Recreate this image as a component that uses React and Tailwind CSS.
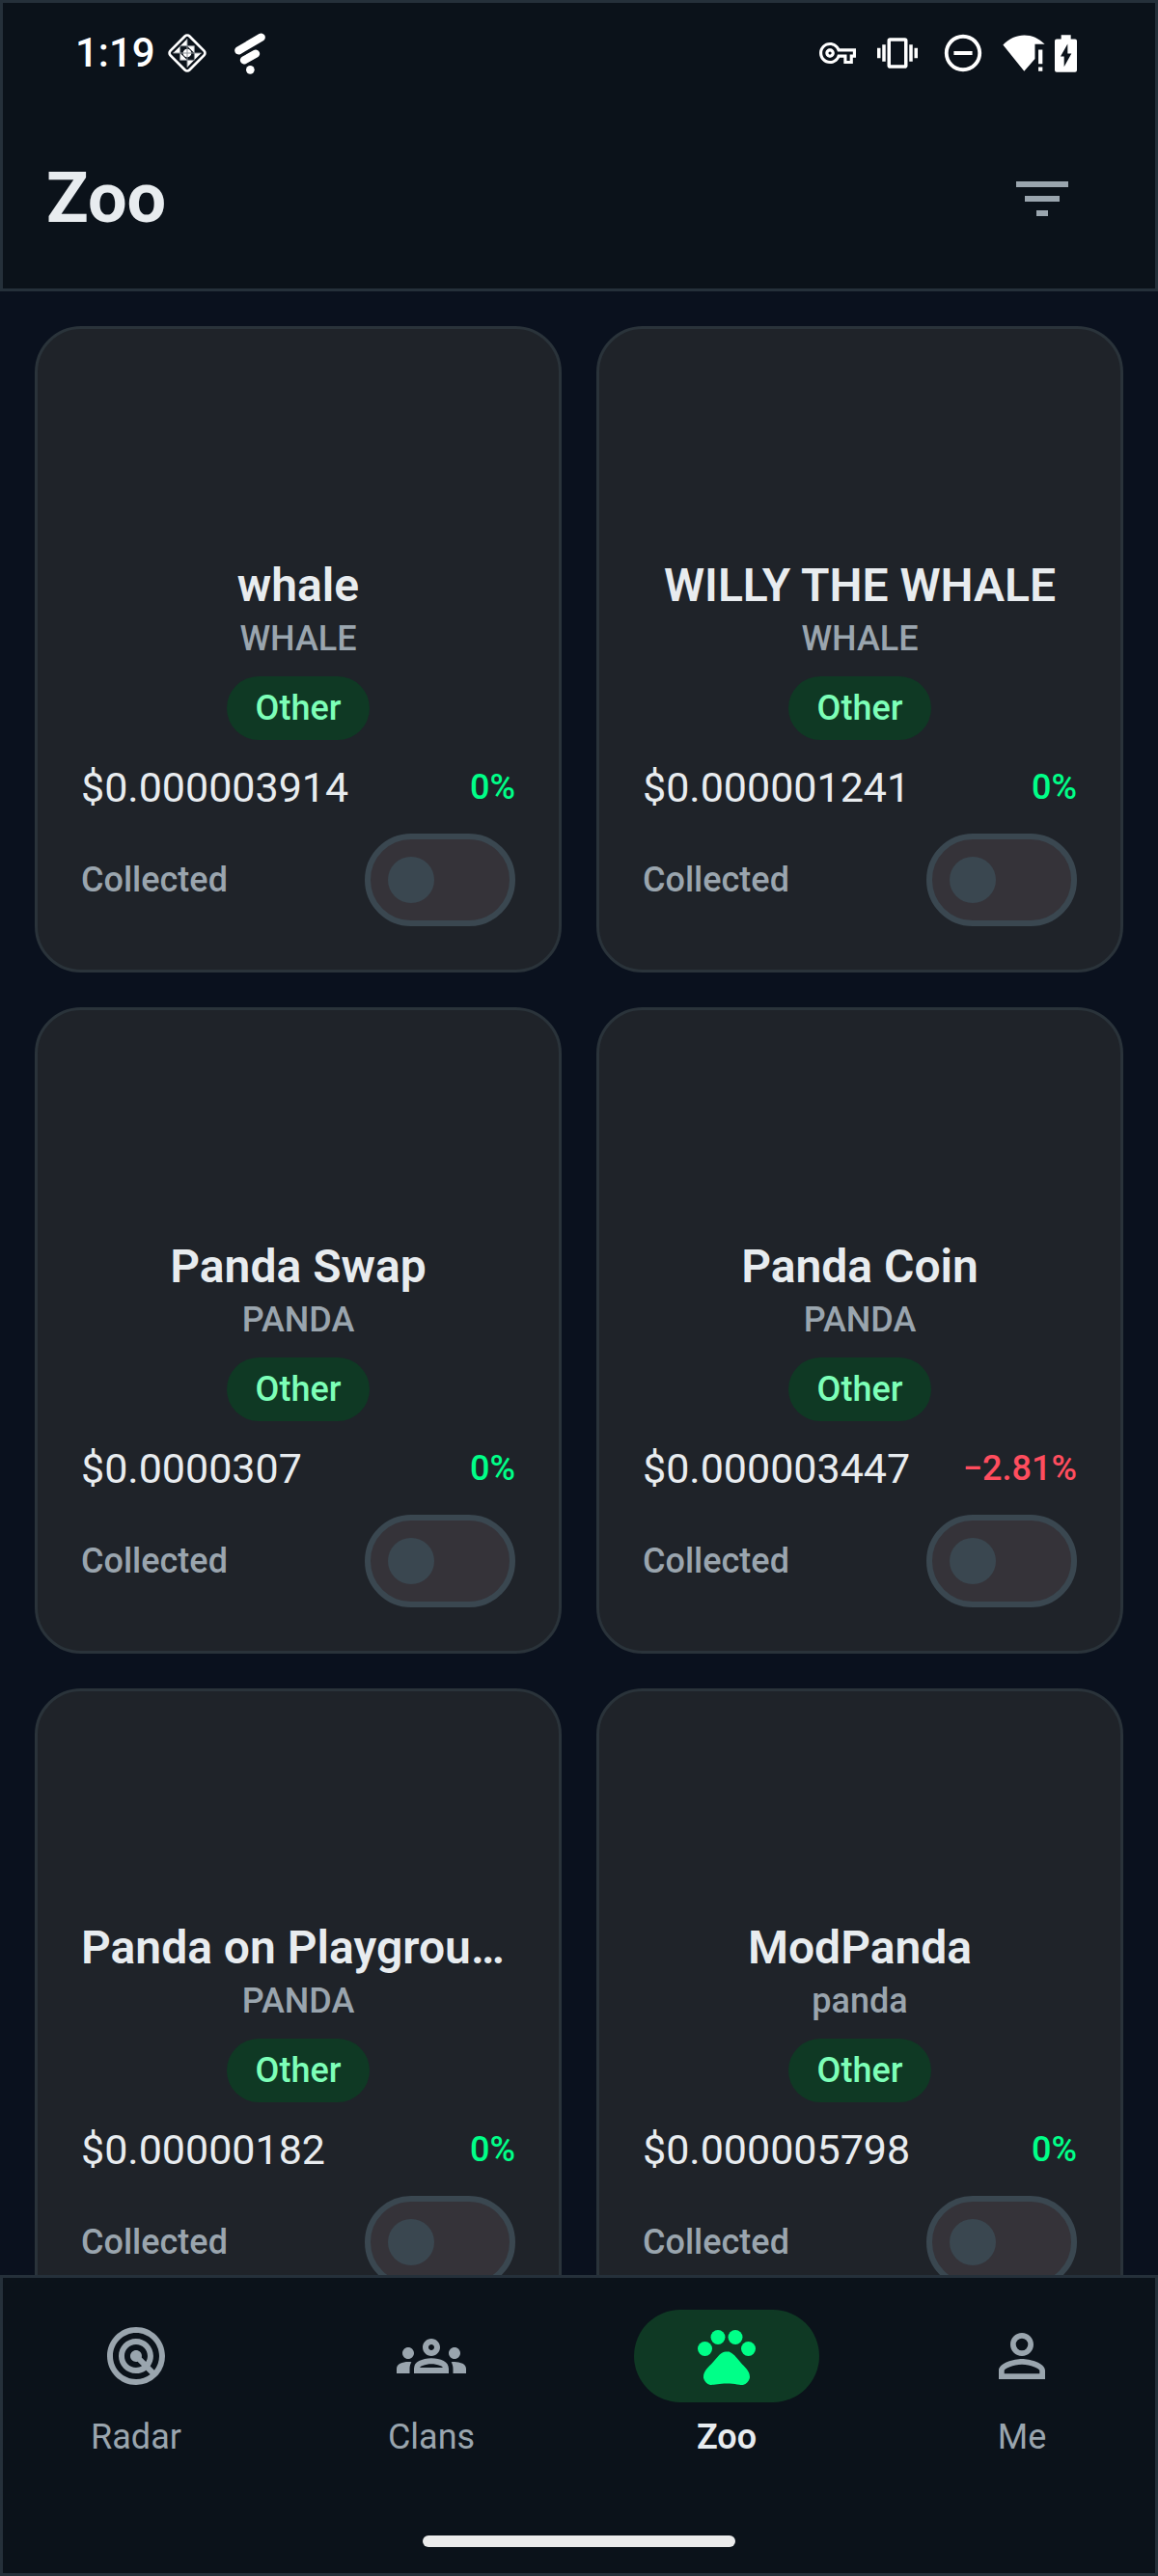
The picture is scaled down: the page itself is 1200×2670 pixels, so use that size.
import React from 'react';
import {
    MdFilterList,
    MdOutlineGroups,
    MdOutlineVpnKey,
    MdPersonOutline,
    MdPets,
    MdRadar,
    MdRemoveCircleOutline,
    MdVibration,
} from 'react-icons/md';

const coins = [
    { id: 1, name: 'whale', ticker: 'WHALE', tag: 'Other', price: '$0.000003914', change: 0 },
    { id: 2, name: 'WILLY THE WHALE', ticker: 'WHALE', tag: 'Other', price: '$0.000001241', change: 0 },
    { id: 3, name: 'Panda Swap', ticker: 'PANDA', tag: 'Other', price: '$0.0000307', change: 0 },
    { id: 4, name: 'Panda Coin', ticker: 'PANDA', tag: 'Other', price: '$0.000003447', change: -2.81 },
    { id: 5, name: 'Panda on Playground', ticker: 'PANDA', tag: 'Other', price: '$0.00000182', change: 0 },
    { id: 6, name: 'ModPanda', ticker: 'panda', tag: 'Other', price: '$0.000005798', change: 0 },
];

const tabs = [
    { label: 'Radar', icon: MdRadar },
    { label: 'Clans', icon: MdOutlineGroups },
    { label: 'Zoo', icon: MdPets, active: true },
    { label: 'Me', icon: MdPersonOutline },
];

function formatChange(change) {
    return `${change < 0 ? '−' : ''}${Math.abs(change)}%`;
}

function DiamondIcon({ className }) {
    return (
        <svg viewBox="0 0 126 126" className={className} aria-hidden="true">
            <rect x="21" y="21" width="84" height="84" rx="10" transform="rotate(45 63 63)" fill="none" stroke="currentColor" strokeWidth="8" />
            <g fill="currentColor">
                {/* Pinwheel blades */}
                <path d="M41 41L63 19V41zM19 63L41 41V63zM85 63H107L85 85zM63 85H85L63 107z" />
                {/* Inner corners */}
                <path d="M63 41H85V63zM41 63V85H63z" />
                <circle cx="63" cy="63" r="13" />
            </g>
            <path d="M41 41H85V85H41zM63 19V107M19 63H107" fill="none" stroke="#8b9096" strokeWidth="3" />
        </svg>
    );
}

function StripesIcon({ className }) {
    return (
        <svg viewBox="732 100 96 129" className={className} aria-hidden="true">
            <g stroke="currentColor" strokeWidth="25" strokeLinecap="round">
                <path d="M745 155L815 114" />
                <path d="M762 185L798 165" />
            </g>
            <circle cx="781" cy="215" r="13" fill="currentColor" />
        </svg>
    );
}

function WifiAlertIcon({ className }) {
    return (
        <svg viewBox="717 105 132 116" className={className} fill="currentColor" aria-hidden="true">
            <path d="M717 137C754 97 812 96 849 135H818V181L784 220Z" />
            <path d="M829 152h13v45h-13zM829 207h13v13h-13z" />
        </svg>
    );
}

function BatteryIcon({ className }) {
    return (
        <svg viewBox="879 105 69 116" className={className} fill="currentColor" aria-hidden="true">
            <path
                fillRule="evenodd"
                d="M899 105h30v13h13q6 0 6 6v91q0 6-6 6h-57q-6 0-6-6v-91q0-6 6-6h14zM919 133L897 172H908V204L931 163H919z"
            />
        </svg>
    );
}

function StatusBar() {
    return (
        <div className="flex h-[104px] items-center justify-between pl-[75px] pr-[81px] text-white">
            <div className="flex items-center">
                <span className="text-[42px] leading-[60px] font-medium">1:19</span>
                <DiamondIcon className="ml-3 size-[42px]" />
                <StripesIcon className="ml-7 h-[43px] w-8" />
            </div>
            <div className="flex items-center">
                <MdOutlineVpnKey className="size-[38px]" />
                <MdVibration className="ml-[22px] size-[42px]" />
                <MdRemoveCircleOutline className="ml-6 size-[46px]" />
                <WifiAlertIcon className="ml-[18px] h-[38px] w-11" />
                <BatteryIcon className="ml-[10px] h-[39px] w-[23px]" />
            </div>
        </div>
    );
}

function CoinCard({ coin }) {
    const toggleId = `collected-${coin.id}`;

    return (
        <article className="min-w-0 rounded-[48px] border-3 border-[#2a333a] bg-[#1f2329] p-[45px]">
            {/* Artwork slot */}
            <div className="h-[190px]" />

            <div className="flex flex-col items-center">
                <h2 className="max-w-full truncate text-5xl leading-[62px] font-semibold text-[#e8ecef]">{coin.name}</h2>
                <p className="text-4xl leading-[48px] font-medium text-[#9aa5ae]">{coin.ticker}</p>
                <span className="mt-[15px] rounded-full bg-[#0f3924] px-[30px] py-[9px] text-4xl leading-[48px] font-medium text-[#7dffb8]">
                    {coin.tag}
                </span>
            </div>

            <div className="mt-[19px] flex items-center justify-between">
                <span className="text-[43px] leading-[60px] text-[#e8ecef]">{coin.price}</span>
                <span className={`text-4xl leading-[48px] font-medium ${coin.change < 0 ? 'text-[#ff4d5e]' : 'text-[#00ff88]'}`}>
                    {formatChange(coin.change)}
                </span>
            </div>

            <div className="mt-[18px] flex items-center justify-between">
                <label htmlFor={toggleId} className="text-4xl leading-[48px] font-medium text-[#9aa5ae]">
                    Collected
                </label>
                <input
                    id={toggleId}
                    type="checkbox"
                    role="switch"
                    className="flex h-24 w-[156px] shrink-0 cursor-pointer appearance-none items-center rounded-full border-6 border-[#3a4750] bg-[#353339] pl-[18px] before:size-12 before:rounded-full before:bg-[#3a4750] before:content-[''] checked:border-[#00ff88] checked:before:translate-x-[60px] checked:before:bg-[#00ff88]"
                />
            </div>
        </article>
    );
}

function TabBar() {
    return (
        <nav className="shrink-0 border-3 border-[#25303a] bg-[#0b121a] pt-[33px] pb-[27px]">
            <ul className="-mx-[3px] flex gap-6">
                {tabs.map(({ label, icon: Icon, active }) => (
                    <li key={label} className="flex-1">
                        <a
                            href={`#${label.toLowerCase()}`}
                            aria-current={active ? 'page' : undefined}
                            className={`flex flex-col items-center gap-3 ${active ? 'text-[#00ff88]' : 'text-[#9aa5ae]'}`}
                        >
                            <span className={`flex h-24 w-48 items-center justify-center rounded-full ${active ? 'bg-[#0f3924]' : ''}`}>
                                <Icon className="size-[72px]" />
                            </span>
                            <span className={`text-4xl leading-[48px] ${active ? 'font-semibold text-[#e8ecef]' : ''}`}>{label}</span>
                        </a>
                    </li>
                ))}
            </ul>
            <div className="mx-auto mt-[78px] h-3 w-[324px] rounded-full bg-[#ebebeb]" />
        </nav>
    );
}

export default function App() {
    return (
        <div className="flex h-screen flex-col bg-[#0a111e] font-[Roboto,sans-serif]">
            <header className="shrink-0 border-3 border-[#25303a] bg-[#0b121a] pb-[21px]">
                <StatusBar />
                <div className="mt-[27px] flex items-center justify-between px-[45px]">
                    <h1 className="text-7xl leading-[96px] font-bold text-[#e8ecef]">Zoo</h1>
                    <button type="button" aria-label="Filter" className="flex size-36 items-center justify-center text-[#9aa5ae]">
                        <MdFilterList className="size-[72px]" />
                    </button>
                </div>
            </header>

            <main className="grid min-h-0 flex-1 grid-cols-2 content-start gap-9 overflow-y-auto p-9 [scrollbar-width:none]">
                {coins.map((coin) => (
                    <CoinCard key={coin.id} coin={coin} />
                ))}
            </main>

            <TabBar />
        </div>
    );
}
